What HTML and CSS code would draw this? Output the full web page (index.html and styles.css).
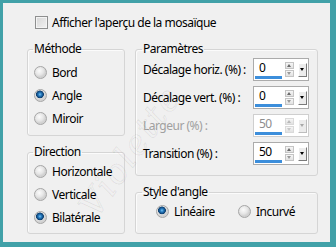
FILE: index.html
```html
<!DOCTYPE html>
<html lang="fr">
<head>
<meta charset="utf-8">
<title>Mosaïque</title>
<link rel="stylesheet" href="styles.css">
</head>
<body>
<div class="panel">
  <div class="check-row"><span class="checkbox"></span><span>Afficher l'aperçu de la mosaïque</span></div>
  <div class="columns">
    <div class="col">
      <fieldset class="group methode">
        <legend>Méthode</legend>
        <div class="radio-row"><span class="radio"></span>Bord</div>
        <div class="radio-row"><span class="radio on"></span>Angle</div>
        <div class="radio-row"><span class="radio"></span>Miroir</div>
      </fieldset>
      <fieldset class="group direction">
        <legend>Direction</legend>
        <div class="radio-row"><span class="radio"></span>Horizontale</div>
        <div class="radio-row"><span class="radio"></span>Verticale</div>
        <div class="radio-row"><span class="radio on"></span>Bilatérale</div>
      </fieldset>
    </div>
    <div class="col">
      <fieldset class="group params">
        <legend>Paramètres</legend>
        <div class="param-row"><span>Décalage horiz. (%) :</span>
          <div class="spin"><span class="val">0</span><span class="arrows"><span class="up"></span><span class="down"></span></span><span class="drop"></span></div>
        </div>
        <div class="param-row"><span>Décalage vert. (%) :</span>
          <div class="spin"><span class="val">0</span><span class="arrows"><span class="up"></span><span class="down"></span></span><span class="drop"></span></div>
        </div>
        <div class="param-row disabled"><span>Largeur (%) :</span>
          <div class="spin"><span class="val">50</span><span class="arrows"><span class="up"></span><span class="down"></span></span><span class="drop"></span></div>
        </div>
        <div class="param-row"><span>Transition (%) :</span>
          <div class="spin"><span class="val">50</span><span class="arrows"><span class="up"></span><span class="down"></span></span><span class="drop"></span></div>
        </div>
      </fieldset>
      <fieldset class="group style">
        <legend>Style d'angle</legend>
        <div class="style-opts">
          <div class="radio-row"><span class="radio on"></span>Linéaire</div>
          <div class="radio-row"><span class="radio"></span>Incurvé</div>
        </div>
      </fieldset>
    </div>
  </div>
  <div class="watermark">Violette</div>
</div>
</body>
</html>
```
FILE: styles.css
```css
html, body {
  margin: 0;
  padding: 0;
}
body {
  background: #41a1a8;
  font-family: "Noto Sans", "Open Sans", sans-serif;
  font-size: 12px;
  letter-spacing: -0.5px;
  color: #000;
  width: 336px;
  height: 247px;
  overflow: hidden;
}
.panel {
  position: relative;
  margin: 3px 6px 0 3px;
  width: 327px;
  height: 239px;
  box-sizing: border-box;
  padding: 13px 0 0 24px;
  background: #f0f0f0;
  overflow: hidden;
}
.check-row {
  display: flex;
  align-items: center;
  gap: 4px;
  height: 13px;
  margin-left: 8px;
  white-space: nowrap;
}
.checkbox {
  width: 13px;
  height: 13px;
  box-sizing: border-box;
  border: 1px solid #8e8f8f;
  background: linear-gradient(135deg, #d6d6d6, #f2f2f2);
  box-shadow: inset 0 0 0 1px #f4f4f4;
  flex: none;
}
.columns {
  display: grid;
  grid-template-columns: 98px 183px;
  column-gap: 10px;
  margin-top: 13px;
}
.col {
  display: flex;
  flex-direction: column;
  gap: 9px;
}
.group {
  margin: 0;
  min-width: 0;
  border: 1px solid #d5d5d5;
  border-radius: 3px;
  box-shadow: inset 1px 1px 0 #fbfbfb;
  padding: 0 8px 0 6px;
}
.group legend {
  margin-left: -1px;
  padding: 0 1px;
  line-height: 14px;
  height: 14px;
}
.methode {
  padding-top: 5px;
  padding-bottom: 5px;
}
.direction {
  padding-top: 1px;
  padding-bottom: 4px;
}
.params {
  padding-left: 7px;
  padding-top: 2px;
  padding-bottom: 10px;
}
.style {
  padding-left: 7px;
  padding-top: 1px;
  padding-bottom: 10px;
}
.radio-row {
  display: flex;
  align-items: center;
  gap: 5px;
  height: 23px;
  white-space: nowrap;
}
.radio {
  width: 13px;
  height: 13px;
  box-sizing: border-box;
  border-radius: 50%;
  border: 1px solid #a6a6a6;
  background: radial-gradient(circle at 40% 35%, #fbfbfb 0, #e6e6e6 4px, #d2d2d2 6px);
  flex: none;
}
.radio.on {
  background:
    radial-gradient(circle at 45% 40%, #7cc6f2 0, #2a7fc4 1.5px, #124e86 3px, #0e3e6c 3.6px, rgba(0,0,0,0) 4.2px),
    radial-gradient(circle at 40% 35%, #fbfbfb 0, #e6e6e6 4px, #d2d2d2 6px);
}
.style-opts {
  display: grid;
  grid-template-columns: 82px auto;
  margin-left: 13px;
}
.param-row {
  display: flex;
  align-items: center;
  justify-content: space-between;
  height: 23px;
  margin-bottom: 5px;
  white-space: nowrap;
}
.param-row:last-child {
  margin-bottom: 0;
}
.param-row.disabled {
  color: #a0a0a0;
}
.spin {
  display: flex;
  align-items: flex-start;
  width: 56px;
  height: 23px;
  box-sizing: border-box;
  border: 1px solid #ababab;
  background: #fff;
}
.disabled .spin {
  border-color: #cfcfcf;
}
.val {
  box-sizing: border-box;
  width: 27px;
  height: 20px;
  margin-left: 1px;
  padding-left: 4px;
  line-height: 18px;
  border-bottom: 3px solid #3c8edb;
  color: #000;
}
.disabled .val {
  color: #8d8d8d;
}
.arrows {
  display: flex;
  flex-direction: column;
  gap: 1px;
  width: 9px;
  margin: 3px 0 0 3px;
}
.arrows span {
  position: relative;
  height: 7px;
  box-sizing: border-box;
  border: 1px solid #c4c4c4;
  background: linear-gradient(#f6f6f6, #e2e2e2);
}
.arrows .up::after,
.arrows .down::after {
  content: "";
  position: absolute;
  left: 1px;
  border-left: 2.5px solid transparent;
  border-right: 2.5px solid transparent;
}
.arrows .up::after {
  top: 1px;
  border-bottom: 3px solid #6a6a6a;
}
.arrows .down::after {
  top: 1px;
  border-top: 3px solid #9a9a9a;
}
.disabled .arrows span {
  border-color: #dadada;
}
.disabled .arrows .up::after {
  border-bottom-color: #b8b8b8;
}
.disabled .arrows .down::after {
  border-top-color: #c8c8c8;
}
.drop {
  position: relative;
  width: 9px;
  height: 14px;
  margin: 4px 0 0 4px;
  box-sizing: border-box;
  border-top: 1px solid #fff;
  border-left: 1px solid #fff;
  border-right: 1px solid #7a7a7a;
  border-bottom: 1px solid #7a7a7a;
  background: #ececec;
}
.drop::after {
  content: "";
  position: absolute;
  left: 1px;
  top: 4px;
  border-left: 2.5px solid transparent;
  border-right: 2.5px solid transparent;
  border-top: 3px solid #000;
}
.disabled .drop {
  border-right-color: #bdbdbd;
  border-bottom-color: #bdbdbd;
}
.disabled .drop::after {
  border-top-color: #a8a8a8;
}
.watermark {
  position: absolute;
  left: 52px;
  top: 128px;
  font-family: "DejaVu Serif", serif;
  font-style: italic;
  font-size: 34px;
  letter-spacing: 2px;
  color: rgba(0, 0, 0, 0.015);
  -webkit-text-stroke: 1px rgba(0, 0, 0, 0.07);
  transform: rotate(-55deg);
  pointer-events: none;
  white-space: nowrap;
}
```
